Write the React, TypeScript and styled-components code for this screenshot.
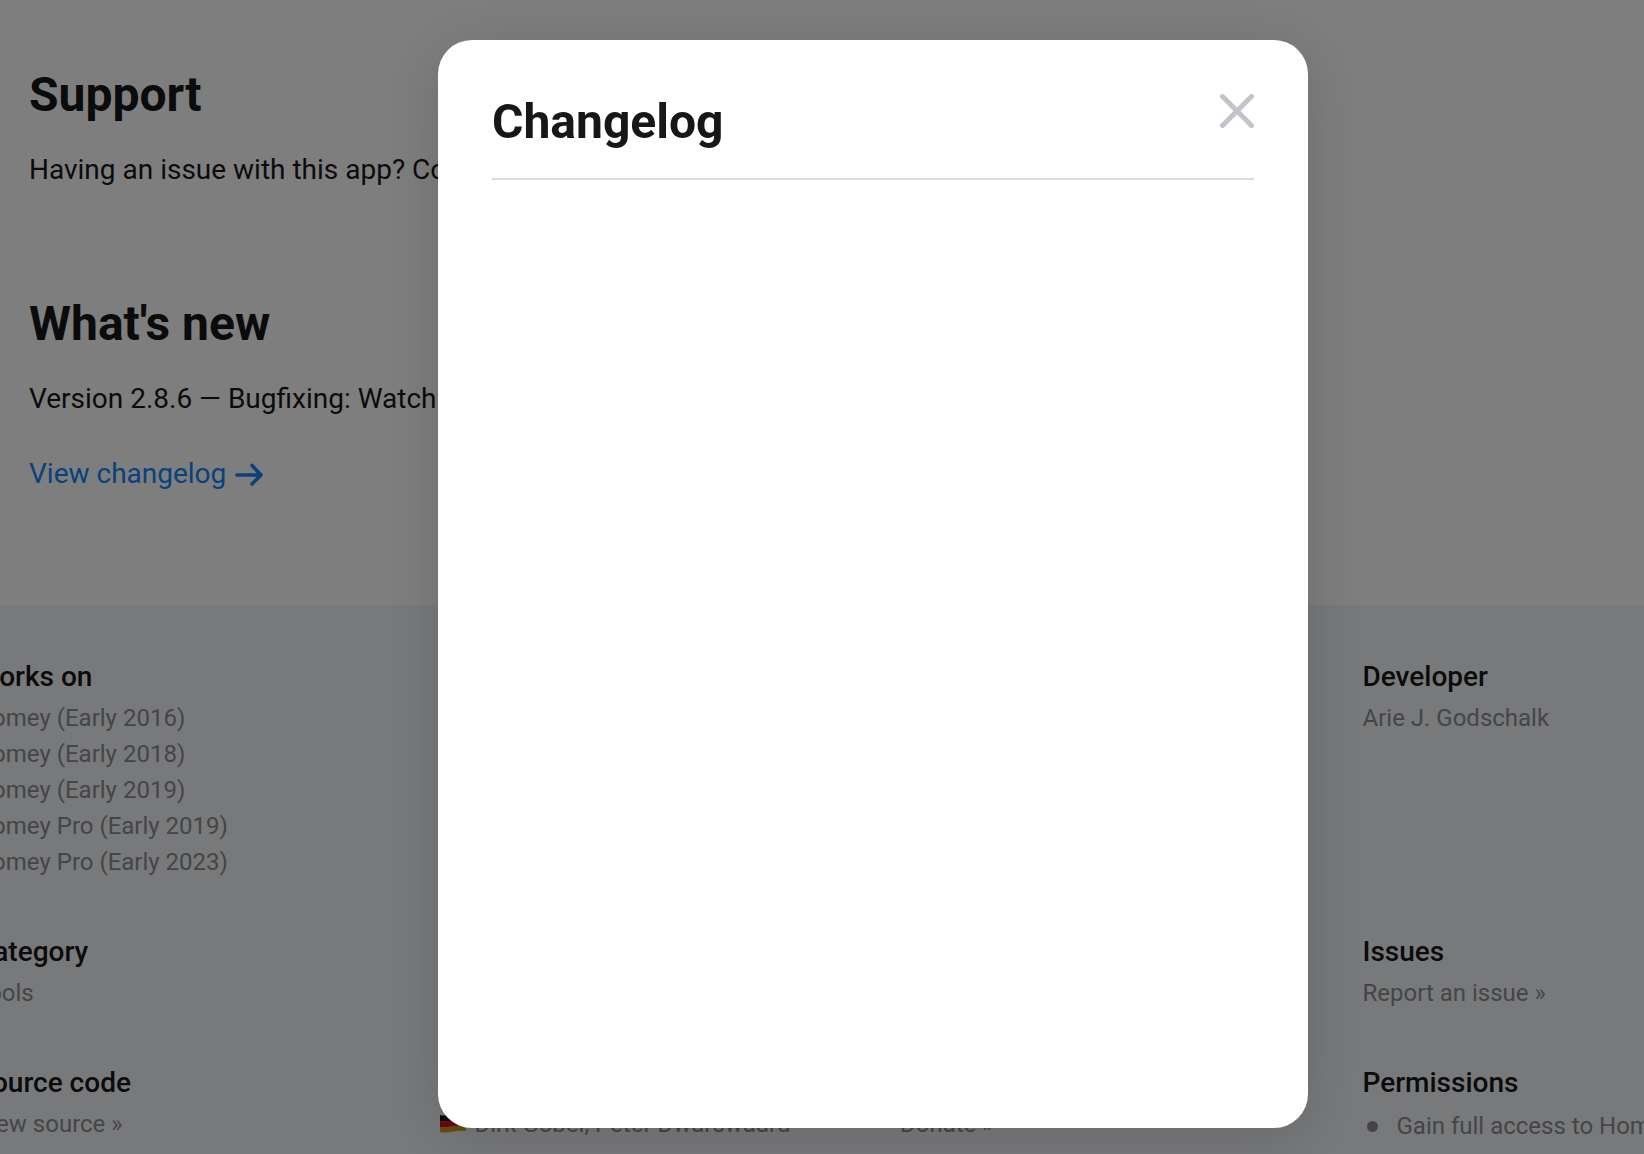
import React from "react";
import styled, { createGlobalStyle } from "styled-components";

const color = {
  text: "#171719",
  muted: "#8a8b8f",
  link: "#0f84fa",
  band: "#f1f3f6",
  rule: "#dcdcde",
  close: "#c3c4c9",
};

const GlobalStyle = createGlobalStyle`
  *, *::before, *::after { box-sizing: border-box; }
  html, body, #root { height: 100%; }
  body {
    margin: 0;
    overflow: hidden;
    background: #fdfdfd;
    color: ${color.text};
    font-family: Roboto, "Liberation Sans", sans-serif;
    font-size: 28px;
    line-height: 42px;
  }
  h2, h3, p, ul { margin: 0; padding: 0; }
`;

const Page = styled.main`
  height: 100%;
  overflow: hidden;
`;

const Content = styled.div`
  display: flex;
  flex-direction: column;
  gap: 103px;
  padding: 65px 29px 110px;
`;

const Section = styled.section`
  display: flex;
  flex-direction: column;
  align-items: flex-start;
  gap: 24px;
`;

const Heading = styled.h2`
  font-size: 48px;
  line-height: 60px;
  font-weight: 700;
`;

const Paragraph = styled.p`
  white-space: nowrap;
`;

const ChangelogLink = styled.a`
  display: flex;
  align-items: center;
  gap: 8px;
  margin-top: 9px;
  color: ${color.link};
  text-decoration: none;
`;

const Band = styled.section`
  padding: 51px 0;
  background: ${color.band};
  overflow: hidden;
`;

const Specs = styled.div`
  display: grid;
  grid-template-columns: repeat(4, minmax(462px, 1fr));
  row-gap: 51px;
  margin: 0 -181px 0 -25px;
`;

const Cell = styled.div<{ $column: number; $untitled?: boolean }>`
  grid-column: ${(p) => p.$column};
  padding-top: ${(p) => (p.$untitled ? "44px" : "0")};
  white-space: nowrap;
`;

const CellTitle = styled.h3`
  margin-bottom: 2px;
  font-size: 28px;
  line-height: 42px;
  font-weight: 500;
`;

const List = styled.ul`
  list-style: none;
`;

const Item = styled.li`
  display: flex;
  align-items: center;
  gap: 7px;
  color: ${color.muted};
  font-size: 24px;
  line-height: 36px;
`;

const Permission = styled(Item)`
  gap: 19px;
  padding: 2px 4px;

  &::before {
    content: "";
    width: 11px;
    height: 11px;
    border-radius: 50%;
    background: currentColor;
  }
`;

const ItemLink = styled.a`
  color: inherit;
  text-decoration: none;
`;

const Overlay = styled.div`
  position: fixed;
  inset: 0;
  display: flex;
  padding: 40px 336px 26px 438px;
  background: rgba(0, 0, 0, 0.5);
`;

const Dialog = styled.div`
  flex: 1;
  padding: 52px 54px;
  border-radius: 34px;
  background: #ffffff;
  box-shadow: 0 10px 60px rgba(0, 0, 0, 0.15);
`;

const DialogHeader = styled.header`
  display: flex;
  justify-content: space-between;
  align-items: flex-start;
  padding-bottom: 26px;
  border-bottom: 2px solid ${color.rule};
`;

const CloseButton = styled.button`
  display: flex;
  padding: 2px 0;
  border: 0;
  background: none;
  color: ${color.close};
  cursor: pointer;
`;

function Arrow() {
  return (
    <svg width="30" height="24" viewBox="0 0 30 24" fill="none" stroke="currentColor" strokeWidth="3.6" strokeLinecap="round" strokeLinejoin="round" aria-hidden="true">
      <path d="M3 13H26.5M18 3.5L27 13L18 22" />
    </svg>
  );
}

function Cross() {
  return (
    <svg width="34" height="34" viewBox="0 0 34 34" fill="none" stroke="currentColor" strokeWidth="5" strokeLinecap="round" aria-hidden="true">
      <path d="M2.5 2.5L31.5 31.5M31.5 2.5L2.5 31.5" />
    </svg>
  );
}

function GermanFlag() {
  return (
    <svg width="30" height="22" viewBox="0 0 30 22" aria-hidden="true">
      <path d="M2 2C9 4 18 0 28 1V7C18 6 11 9 2 8Z" fill="#111" />
      <path d="M2 8C11 9 18 6 28 7V13C18 12 11 15 2 14Z" fill="#d3111c" />
      <path d="M2 14C11 15 18 11 28 13V18C18 17 11 21 2 19Z" fill="#c99a1c" />
    </svg>
  );
}

const models = [
  "Homey (Early 2016)",
  "Homey (Early 2018)",
  "Homey (Early 2019)",
  "Homey Pro (Early 2019)",
  "Homey Pro (Early 2023)",
];

export default function App() {
  return (
    <>
      <GlobalStyle />
      <Page>
        <Content>
          <Section>
            <Heading>Support</Heading>
            <Paragraph>Having an issue with this app? Contact</Paragraph>
          </Section>
          <Section>
            <Heading>What's new</Heading>
            <Paragraph>Version 2.8.6 — Bugfixing: Watch</Paragraph>
            <ChangelogLink href="#changelog">
              View changelog
              <Arrow />
            </ChangelogLink>
          </Section>
        </Content>
        <Band>
          <Specs>
            <Cell $column={1}>
              <CellTitle>Works on</CellTitle>
              <List>
                {models.map((model) => (
                  <Item key={model}>{model}</Item>
                ))}
              </List>
            </Cell>
            <Cell $column={4}>
              <CellTitle>Developer</CellTitle>
              <List>
                <Item>Arie J. Godschalk</Item>
              </List>
            </Cell>
            <Cell $column={1}>
              <CellTitle>Category</CellTitle>
              <List>
                <Item>Tools</Item>
              </List>
            </Cell>
            <Cell $column={4}>
              <CellTitle>Issues</CellTitle>
              <List>
                <Item>
                  <ItemLink href="#issues">Report an issue »</ItemLink>
                </Item>
              </List>
            </Cell>
            <Cell $column={1}>
              <CellTitle>Source code</CellTitle>
              <List>
                <Item>
                  <ItemLink href="#source">View source »</ItemLink>
                </Item>
              </List>
            </Cell>
            <Cell $column={2} $untitled>
              <List>
                <Item>
                  <GermanFlag />
                  Dirk Gobel, Peter Dwarswaard
                </Item>
              </List>
            </Cell>
            <Cell $column={3} $untitled>
              <List>
                <Item>
                  <ItemLink href="#donate">Donate »</ItemLink>
                </Item>
              </List>
            </Cell>
            <Cell $column={4}>
              <CellTitle>Permissions</CellTitle>
              <List>
                <Permission>Gain full access to Homey</Permission>
              </List>
            </Cell>
          </Specs>
        </Band>
      </Page>
      <Overlay>
        <Dialog role="dialog" aria-modal="true" aria-labelledby="changelog-title">
          <DialogHeader>
            <Heading id="changelog-title">Changelog</Heading>
            <CloseButton type="button" aria-label="Close">
              <Cross />
            </CloseButton>
          </DialogHeader>
        </Dialog>
      </Overlay>
    </>
  );
}
